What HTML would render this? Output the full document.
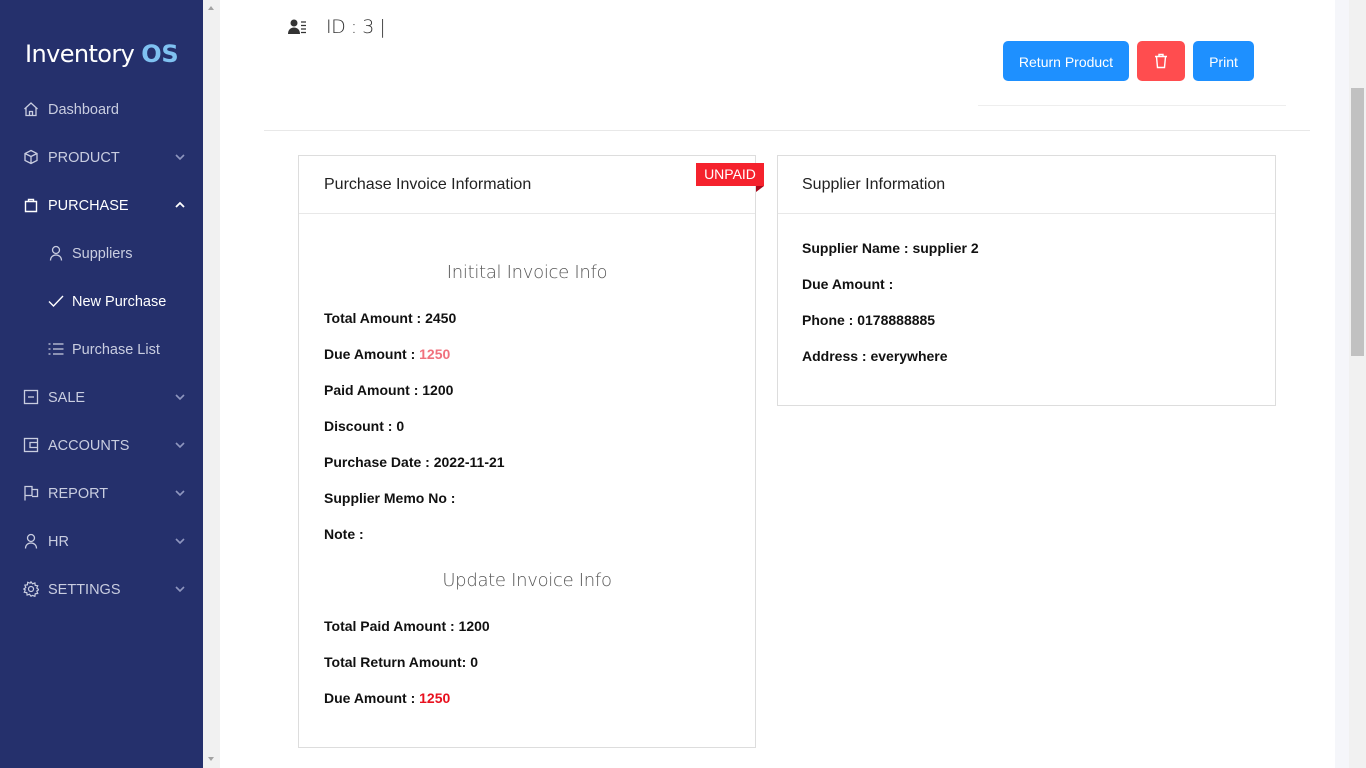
<!DOCTYPE html>
<html><head><meta charset="utf-8"><style>
*{box-sizing:border-box;margin:0;padding:0}
body{width:1366px;height:768px;overflow:hidden;font-family:"Liberation Sans",Arial,sans-serif;background:#fff;position:relative}
.sb{position:absolute;left:0;top:0;width:203px;height:768px;background:#25306c}
.logo{position:absolute;left:25px;top:40px;font-size:24px;color:#fff;font-family:"DejaVu Sans","Liberation Sans",sans-serif;font-weight:normal;letter-spacing:-0.6px}
.logo span{color:#7fc1f1;font-weight:bold;letter-spacing:-0.3px}
.mi{position:absolute;left:0;width:203px;height:24px;color:#c9cde0;font-size:14.5px;line-height:24px}
.mi svg{position:absolute;left:23px;top:4px}
.mi .t{position:absolute;left:48px;top:1px}
.mi .ch{position:absolute;left:174px;top:6px}
.sub .t{left:72px}
.sub svg{left:48px}
.sc1{position:absolute;left:203px;top:0;width:17px;height:768px;background:#f1f1f1}
.sc2{position:absolute;left:1335px;top:0;width:14px;height:768px;background:#f5f6fa}
.sc3{position:absolute;left:1349px;top:0;width:17px;height:768px;background:#f1f1f1}
.thumb{position:absolute;left:1351px;top:88px;width:13px;height:268px;background:#c1c1c1}
.btn{position:absolute;top:41px;height:40px;border-radius:5px;background:#1e90ff;color:#fff;font-size:14px;line-height:42px;text-align:center}
.card{position:absolute;border:1px solid #ddd;background:#fff}
.ch1{height:58px;border-bottom:1px solid #e8e8e8;padding-left:25px;line-height:57px;font-size:16px;color:#222}
.row{position:absolute;font-weight:bold;font-size:14px;color:#111}
.h{position:absolute;width:100%;text-align:center;font-size:18px;color:#555;font-family:"DejaVu Sans",sans-serif;font-weight:300;letter-spacing:-0.3px}
</style></head><body>
<div class="sb">
<div class="logo">Inventory <span>OS</span></div>
<div class="mi" style="top:97px"><svg width="16" height="16" viewBox="0 0 16 16" fill="none" stroke="#c9cde0" stroke-width="1.3"><path d="M1.5 8L8 2l6.5 6M3 6.8V14.5h10V6.8M6.5 14.5v-4h3v4"/></svg><span class="t">Dashboard</span></div>
<div class="mi" style="top:145px"><svg width="16" height="16" viewBox="0 0 16 16" fill="none" stroke="#c9cde0" stroke-width="1.3"><path d="M8 1.5l6 3v7l-6 3-6-3v-7zM2 4.5l6 3 6-3M8 7.5v7"/></svg><span class="t">PRODUCT</span><svg class="ch" width="12" height="12" viewBox="0 0 12 12"><path d="M2 4l4 4 4-4" stroke="#8f96bf" stroke-width="1.6" fill="none"/></svg></div>
<div class="mi" style="top:193px;color:#fff"><svg width="16" height="16" viewBox="0 0 16 16" fill="none" stroke="#fff" stroke-width="1.4"><path d="M2.5 4.5h11V14.5h-11zM5.5 4.5V2.5h5v2"/></svg><span class="t">PURCHASE</span><svg class="ch" width="12" height="12" viewBox="0 0 12 12"><path d="M2 8l4-4 4 4" stroke="#fff" stroke-width="1.8" fill="none"/></svg></div>
<div class="mi sub" style="top:241px"><svg width="16" height="16" viewBox="0 0 16 16" fill="none" stroke="#c9cde0" stroke-width="1.3"><circle cx="8" cy="5" r="3.5"/><path d="M2.5 15.5c0-3.5 2.5-5.5 5.5-5.5s5.5 2 5.5 5.5"/></svg><span class="t">Suppliers</span></div>
<div class="mi sub" style="top:289px;color:#fff"><svg width="16" height="16" viewBox="0 0 16 16" fill="none" stroke="#fff" stroke-width="1.4"><path d="M1 8.5l4.5 4.5 9.5-10"/></svg><span class="t">New Purchase</span></div>
<div class="mi sub" style="top:337px"><svg width="16" height="16" viewBox="0 0 16 16" fill="none" stroke="#c9cde0" stroke-width="1.2"><path d="M5 3h10.5M5 8h10.5M5 13h10.5M0.5 3h2M0.5 8h2M0.5 13h2"/></svg><span class="t">Purchase List</span></div>
<div class="mi" style="top:385px"><svg width="16" height="16" viewBox="0 0 16 16" fill="none" stroke="#c9cde0" stroke-width="1.3"><rect x="1.5" y="1.5" width="13" height="13"/><path d="M5 8h6"/></svg><span class="t">SALE</span><svg class="ch" width="12" height="12" viewBox="0 0 12 12"><path d="M2 4l4 4 4-4" stroke="#8f96bf" stroke-width="1.6" fill="none"/></svg></div>
<div class="mi" style="top:433px"><svg width="16" height="16" viewBox="0 0 16 16" fill="none" stroke="#c9cde0" stroke-width="1.3"><rect x="1.5" y="1.5" width="13" height="13"/><path d="M14.5 5.5H7v5h7.5"/></svg><span class="t">ACCOUNTS</span><svg class="ch" width="12" height="12" viewBox="0 0 12 12"><path d="M2 4l4 4 4-4" stroke="#8f96bf" stroke-width="1.6" fill="none"/></svg></div>
<div class="mi" style="top:481px"><svg width="16" height="16" viewBox="0 0 16 16" fill="none" stroke="#c9cde0" stroke-width="1.3"><path d="M2 15.5V1.5h7v9H2M9 4.5h5.5v7H9"/></svg><span class="t">REPORT</span><svg class="ch" width="12" height="12" viewBox="0 0 12 12"><path d="M2 4l4 4 4-4" stroke="#8f96bf" stroke-width="1.6" fill="none"/></svg></div>
<div class="mi" style="top:529px"><svg width="16" height="16" viewBox="0 0 16 16" fill="none" stroke="#c9cde0" stroke-width="1.3"><circle cx="8" cy="5" r="3.5"/><path d="M2.5 15.5c0-3.5 2.5-5.5 5.5-5.5s5.5 2 5.5 5.5"/></svg><span class="t">HR</span><svg class="ch" width="12" height="12" viewBox="0 0 12 12"><path d="M2 4l4 4 4-4" stroke="#8f96bf" stroke-width="1.6" fill="none"/></svg></div>
<div class="mi" style="top:577px"><svg width="16" height="16" viewBox="0 0 16 16" fill="none" stroke="#c9cde0" stroke-width="1.2"><circle cx="8" cy="8" r="2.5"/><path d="M8 0.8l1.5 2 2.4-.9.3 2.5 2.5.3-.9 2.4 2 1.5-2 1.5.9 2.4-2.5.3-.3 2.5-2.4-.9L8 15.2l-1.5-2-2.4.9-.3-2.5-2.5-.3.9-2.4L0.8 8l2-1.5-.9-2.4 2.5-.3.3-2.5 2.4.9z"/></svg><span class="t">SETTINGS</span><svg class="ch" width="12" height="12" viewBox="0 0 12 12"><path d="M2 4l4 4 4-4" stroke="#8f96bf" stroke-width="1.6" fill="none"/></svg></div>
</div>
<div class="sc1"><div style="position:absolute;left:5px;top:6px;border:3.5px solid transparent;border-bottom:4px solid #a3a3a3;border-top:0"></div><div style="position:absolute;left:5px;top:757px;border:3.5px solid transparent;border-top:4px solid #a3a3a3;border-bottom:0"></div></div>
<div class="sc2"></div><div class="sc3"></div><div class="thumb"></div>

<svg style="position:absolute;left:288px;top:19px" width="19" height="16" viewBox="0 0 19 16"><circle cx="6" cy="4" r="3.5" fill="#333"/><path d="M0 15c0-4 2.5-6.5 6-6.5s6 2.5 6 6.5z" fill="#333"/><path d="M13 3h5M13 6.5h5M13 10h5M13 13.5h5" stroke="#333" stroke-width="1.2"/></svg>
<div style="position:absolute;left:326px;top:16px;font-size:19px;color:#333;font-family:'DejaVu Sans',sans-serif;font-weight:300;letter-spacing:-0.5px">ID : 3 |</div>

<div class="btn" style="left:1003px;width:126px">Return Product</div>
<div class="btn" style="left:1137px;width:48px;background:#ff4d4f"><svg style="margin-top:12px" width="14" height="16" viewBox="0 0 14 16" fill="none" stroke="#fff" stroke-width="1.4"><path d="M1 3.5h12M5 3.5V1.5h4v2M2.5 3.5l1 11h7l1-11"/></svg></div>
<div class="btn" style="left:1193px;width:61px">Print</div>
<div style="position:absolute;left:978px;top:105px;width:308px;height:1px;background:#eee"></div>
<div style="position:absolute;left:264px;top:130px;width:1046px;height:1px;background:#e8e8e8"></div>

<div class="card" style="left:298px;top:155px;width:458px;height:593px">
<div class="ch1">Purchase Invoice Information</div>
<div class="h" style="top:106px">Initital Invoice Info</div>
<div class="row" style="left:25px;top:154px">Total Amount : 2450</div>
<div class="row" style="left:25px;top:190px">Due Amount : <span style="color:#f0717d">1250</span></div>
<div class="row" style="left:25px;top:226px">Paid Amount : 1200</div>
<div class="row" style="left:25px;top:262px">Discount : 0</div>
<div class="row" style="left:25px;top:298px">Purchase Date : 2022-11-21</div>
<div class="row" style="left:25px;top:334px">Supplier Memo No :</div>
<div class="row" style="left:25px;top:370px">Note :</div>
<div class="h" style="top:414px">Update Invoice Info</div>
<div class="row" style="left:25px;top:462px">Total Paid Amount : 1200</div>
<div class="row" style="left:25px;top:498px">Total Return Amount: 0</div>
<div class="row" style="left:25px;top:534px">Due Amount : <span style="color:#e8101e">1250</span></div>
</div>
<div style="position:absolute;left:696px;top:163px;width:68px;height:23px;background:#f5222d;color:#fff;font-size:14px;line-height:23px;text-align:center">UNPAID</div>
<div style="position:absolute;left:756px;top:186px;border-left:8px solid #a8071a;border-bottom:6px solid transparent"></div>

<div class="card" style="left:777px;top:155px;width:499px;height:251px">
<div class="ch1" style="padding-left:24px">Supplier Information</div>
<div class="row" style="left:24px;top:84px">Supplier Name : supplier 2</div>
<div class="row" style="left:24px;top:120px">Due Amount :</div>
<div class="row" style="left:24px;top:156px">Phone : 0178888885</div>
<div class="row" style="left:24px;top:192px">Address : everywhere</div>
</div>
</body></html>
